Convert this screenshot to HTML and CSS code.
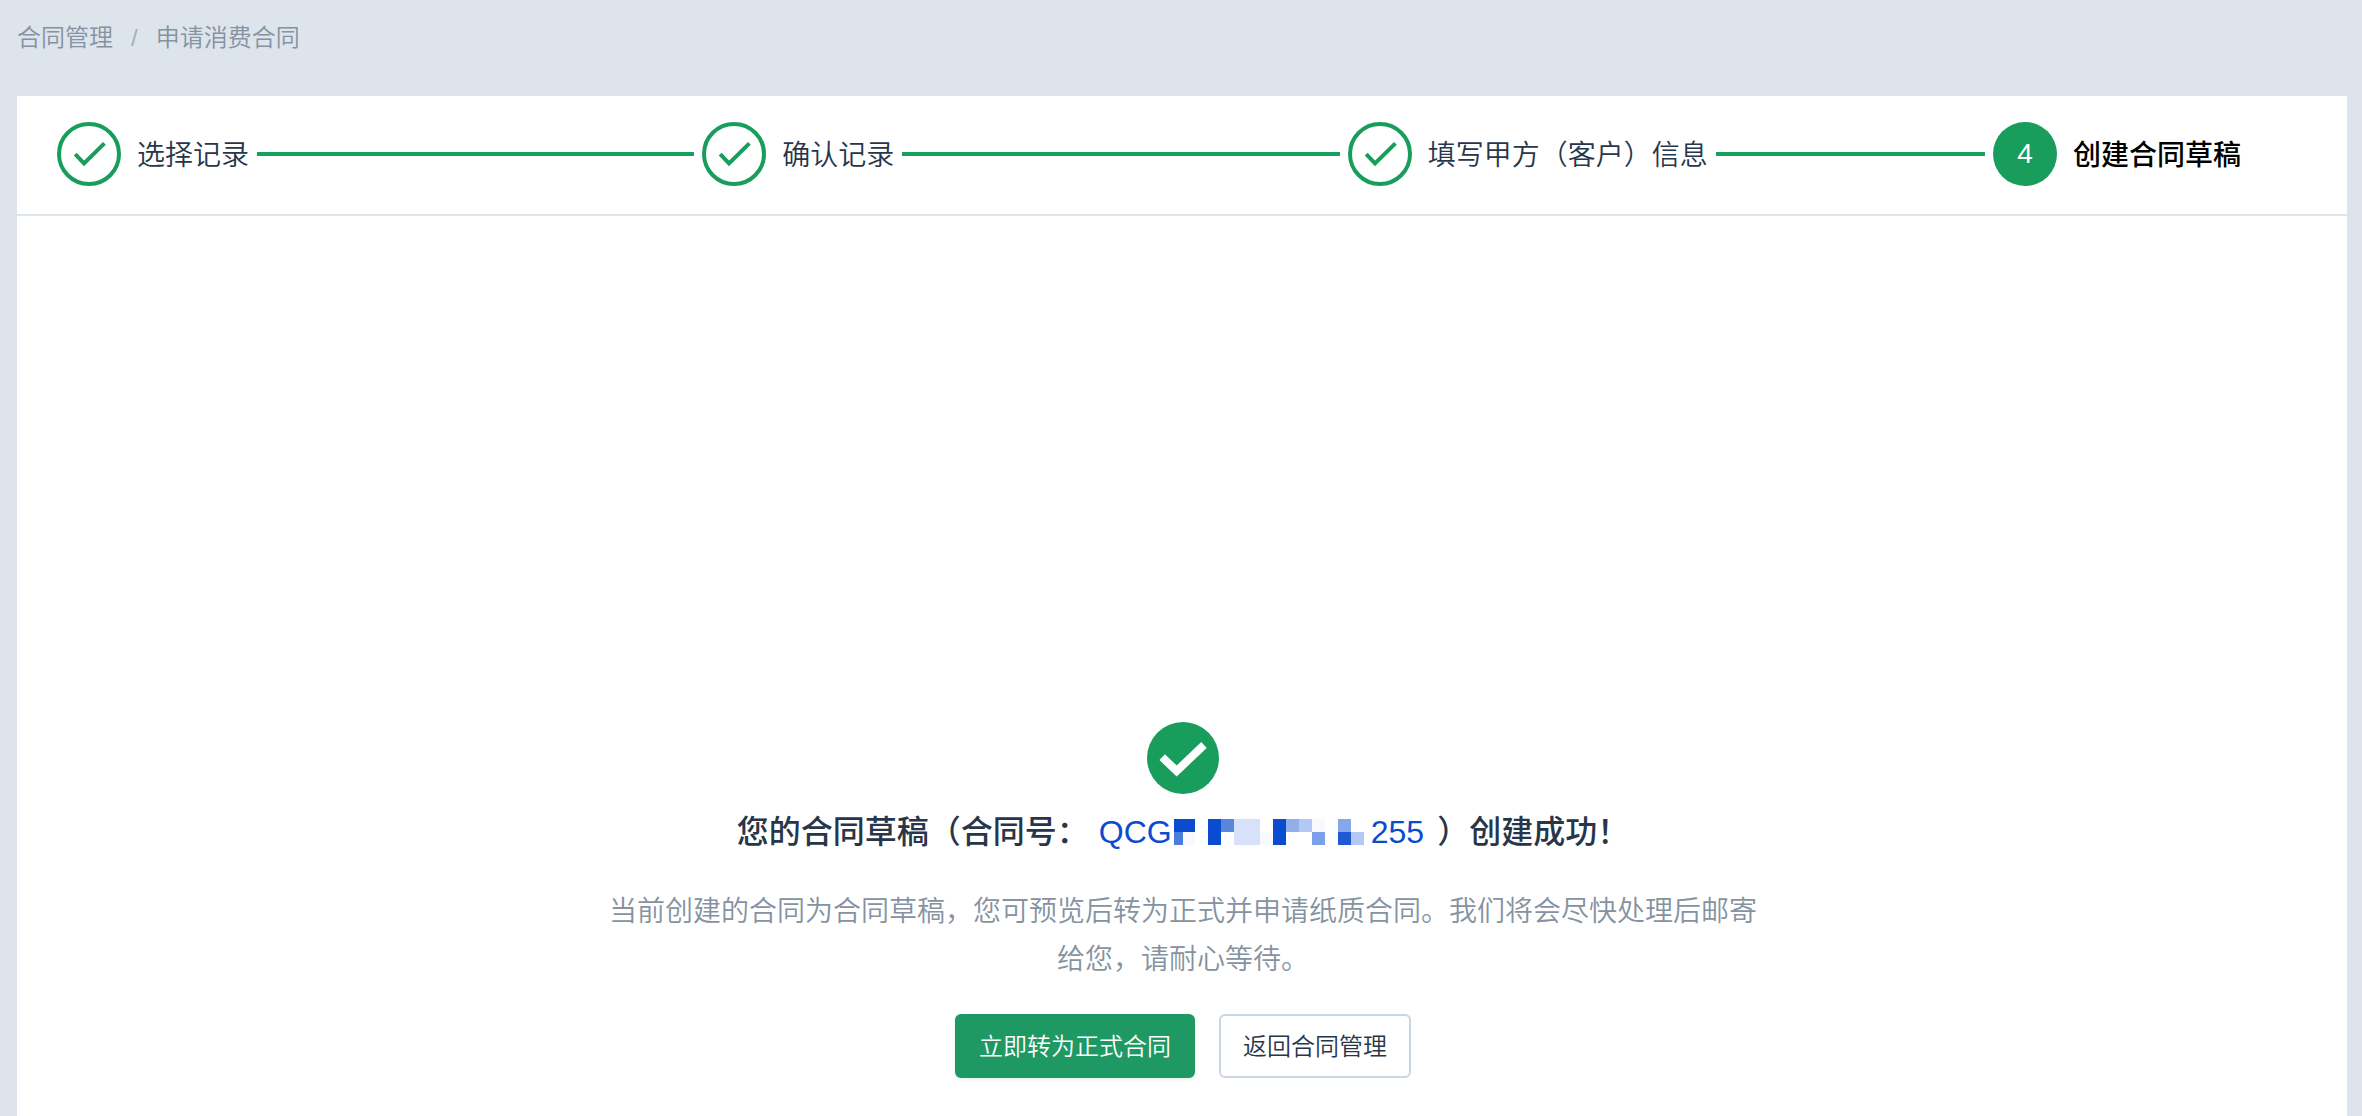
FILE: index.html
```html
<!DOCTYPE html>
<html lang="zh-CN">
<head>
<meta charset="utf-8">
<meta name="viewport" content="width=device-width, initial-scale=1">
<title>申请消费合同</title>
<link rel="stylesheet" href="styles.css">
</head>
<body>
<nav class="breadcrumb" aria-label="面包屑">
  <a href="#">合同管理</a>
  <span class="breadcrumb-separator">/</span>
  <a href="#">申请消费合同</a>
</nav>
<main class="card">
  <ol class="steps">
    <li class="step">
      <svg class="step-icon" viewBox="0 0 64 64" aria-hidden="true"><circle cx="32" cy="32" r="30"/><path d="M18.2 32.2 27 41.4 47.4 21.4"/></svg>
      <span class="step-label">选择记录</span>
    </li>
    <li class="step">
      <svg class="step-icon" viewBox="0 0 64 64" aria-hidden="true"><circle cx="32" cy="32" r="30"/><path d="M18.2 32.2 27 41.4 47.4 21.4"/></svg>
      <span class="step-label">确认记录</span>
    </li>
    <li class="step">
      <svg class="step-icon" viewBox="0 0 64 64" aria-hidden="true"><circle cx="32" cy="32" r="30"/><path d="M18.2 32.2 27 41.4 47.4 21.4"/></svg>
      <span class="step-label">填写甲方（客户）信息</span>
    </li>
    <li class="step step-current" aria-current="step">
      <span class="step-number">4</span>
      <span class="step-label">创建合同草稿</span>
    </li>
  </ol>
  <section class="result">
    <svg class="result-icon" viewBox="0 0 72 72" aria-hidden="true"><circle cx="36" cy="36" r="36"/><path d="M15.2 35.2 29.7 49 57 23"/></svg>
    <h1 class="result-title">
      <span>您的合同草稿（合同号：</span>
      <a class="contract-number" href="#">QCG<svg class="mask" viewBox="0 0 190 26" aria-hidden="true">
        <path fill="#0a4bcf" d="M0 0h21v13H0zM34 0h13v26H34zM99 0h13v26H99z"/>
        <path fill="#4a7ddc" d="M0 13h9v13H0z"/>
        <path fill="#5886dd" d="M47 0h13v13H47z"/>
        <path fill="#d7e1f9" d="M60 0h26v26H60z"/>
        <path fill="#f7f9fe" d="M9 13h12v13H9zM86 13h13v13H86zM138 0h13v13H138z"/>
        <path fill="#92afe9" d="M112 0h13v13h-13z"/>
        <path fill="#b3c8f2" d="M125 0h13v13h-13zM177 13h13v13h-13z"/>
        <path fill="#7ca0e7" d="M138 13h13v13h-13z"/>
        <path fill="#86a7e8" d="M164 0h13v13h-13z"/>
        <path fill="#1f59d3" d="M164 13h13v13h-13z"/>
      </svg>255</a>
      <span>）创建成功！</span>
    </h1>
    <p class="result-text">当前创建的合同为合同草稿，您可预览后转为正式并申请纸质合同。我们将会尽快处理后邮寄给您，请耐心等待。</p>
    <div class="actions">
      <button class="button button-primary" type="button">立即转为正式合同</button>
      <button class="button" type="button">返回合同管理</button>
    </div>
  </section>
</main>
</body>
</html>
```
FILE: styles.css
```css
* {
  box-sizing: border-box;
}

body {
  display: flex;
  flex-direction: column;
  min-height: 100vh;
  margin: 0;
  padding: 0 15px 0 17px;
  background: #dde4ec;
  color: #27364a;
  font-family: "Liberation Sans", "Noto Sans CJK SC", sans-serif;
  font-size: 28px;
  font-weight: 350;
}

a {
  color: inherit;
  text-decoration: none;
}

.breadcrumb {
  display: flex;
  gap: 18px;
  padding: 22px 0 42px;
  color: #8592a1;
  font-size: 24px;
  line-height: 32px;
}

.breadcrumb-separator {
  color: #a3afbd;
}

.card {
  flex: 1;
  background: #fff;
}

.steps {
  display: grid;
  grid-template-columns: repeat(3, 1fr) 314px;
  margin: 0;
  padding: 26px 40px 28px;
  border-bottom: 2px solid #dde5ee;
  list-style: none;
}

.step {
  display: flex;
  align-items: center;
  gap: 16px;
  line-height: 40px;
  white-space: nowrap;
}

.step:not(:last-child)::after {
  content: "";
  flex: 1;
  height: 4px;
  margin: 0 8px 0 -8px;
  background: #16a05d;
}

.step-icon {
  flex: none;
  width: 64px;
  height: 64px;
  fill: none;
  stroke: #189d5c;
  stroke-width: 4px;
}

.step-label {
  padding-top: 4px;
}

.step-current {
  color: #000;
  font-weight: 500;
}

.step-number {
  width: 64px;
  border-radius: 50%;
  background: #189d5c;
  color: #fff;
  font-weight: 400;
  line-height: 64px;
  text-align: center;
}

.result {
  display: flex;
  flex-direction: column;
  align-items: center;
  padding: 506px 40px 38px 42px;
}

.result-icon {
  width: 72px;
  height: 72px;
}

.result-icon circle {
  fill: #189d5c;
}

.result-icon path {
  fill: none;
  stroke: #fff;
  stroke-width: 8px;
}

.result-title {
  display: flex;
  gap: 10px;
  margin: 14px 0 0;
  font-size: 32px;
  font-weight: 500;
  line-height: 48px;
}

.contract-number {
  display: flex;
  align-items: center;
  margin-right: 3px;
  color: #0a4bcf;
}

.mask {
  width: 190px;
  height: 26px;
  margin: 0 7px 0 2px;
  shape-rendering: crispEdges;
}

.result-text {
  max-width: 1160px;
  margin: 32px 0 30px;
  color: #8592a1;
  line-height: 48px;
  text-align: center;
}

.actions {
  display: flex;
  gap: 24px;
}

.button {
  height: 64px;
  padding: 0 22px 4px;
  border: 2px solid #cbd6e3;
  border-radius: 6px;
  background: #fff;
  color: #27364a;
  font-family: inherit;
  font-size: 24px;
  font-weight: inherit;
}

.button-primary {
  border-color: #1f9963;
  background: #1f9963;
  box-shadow: 0 2px 4px #1f99631a;
  color: #fff;
}
```
